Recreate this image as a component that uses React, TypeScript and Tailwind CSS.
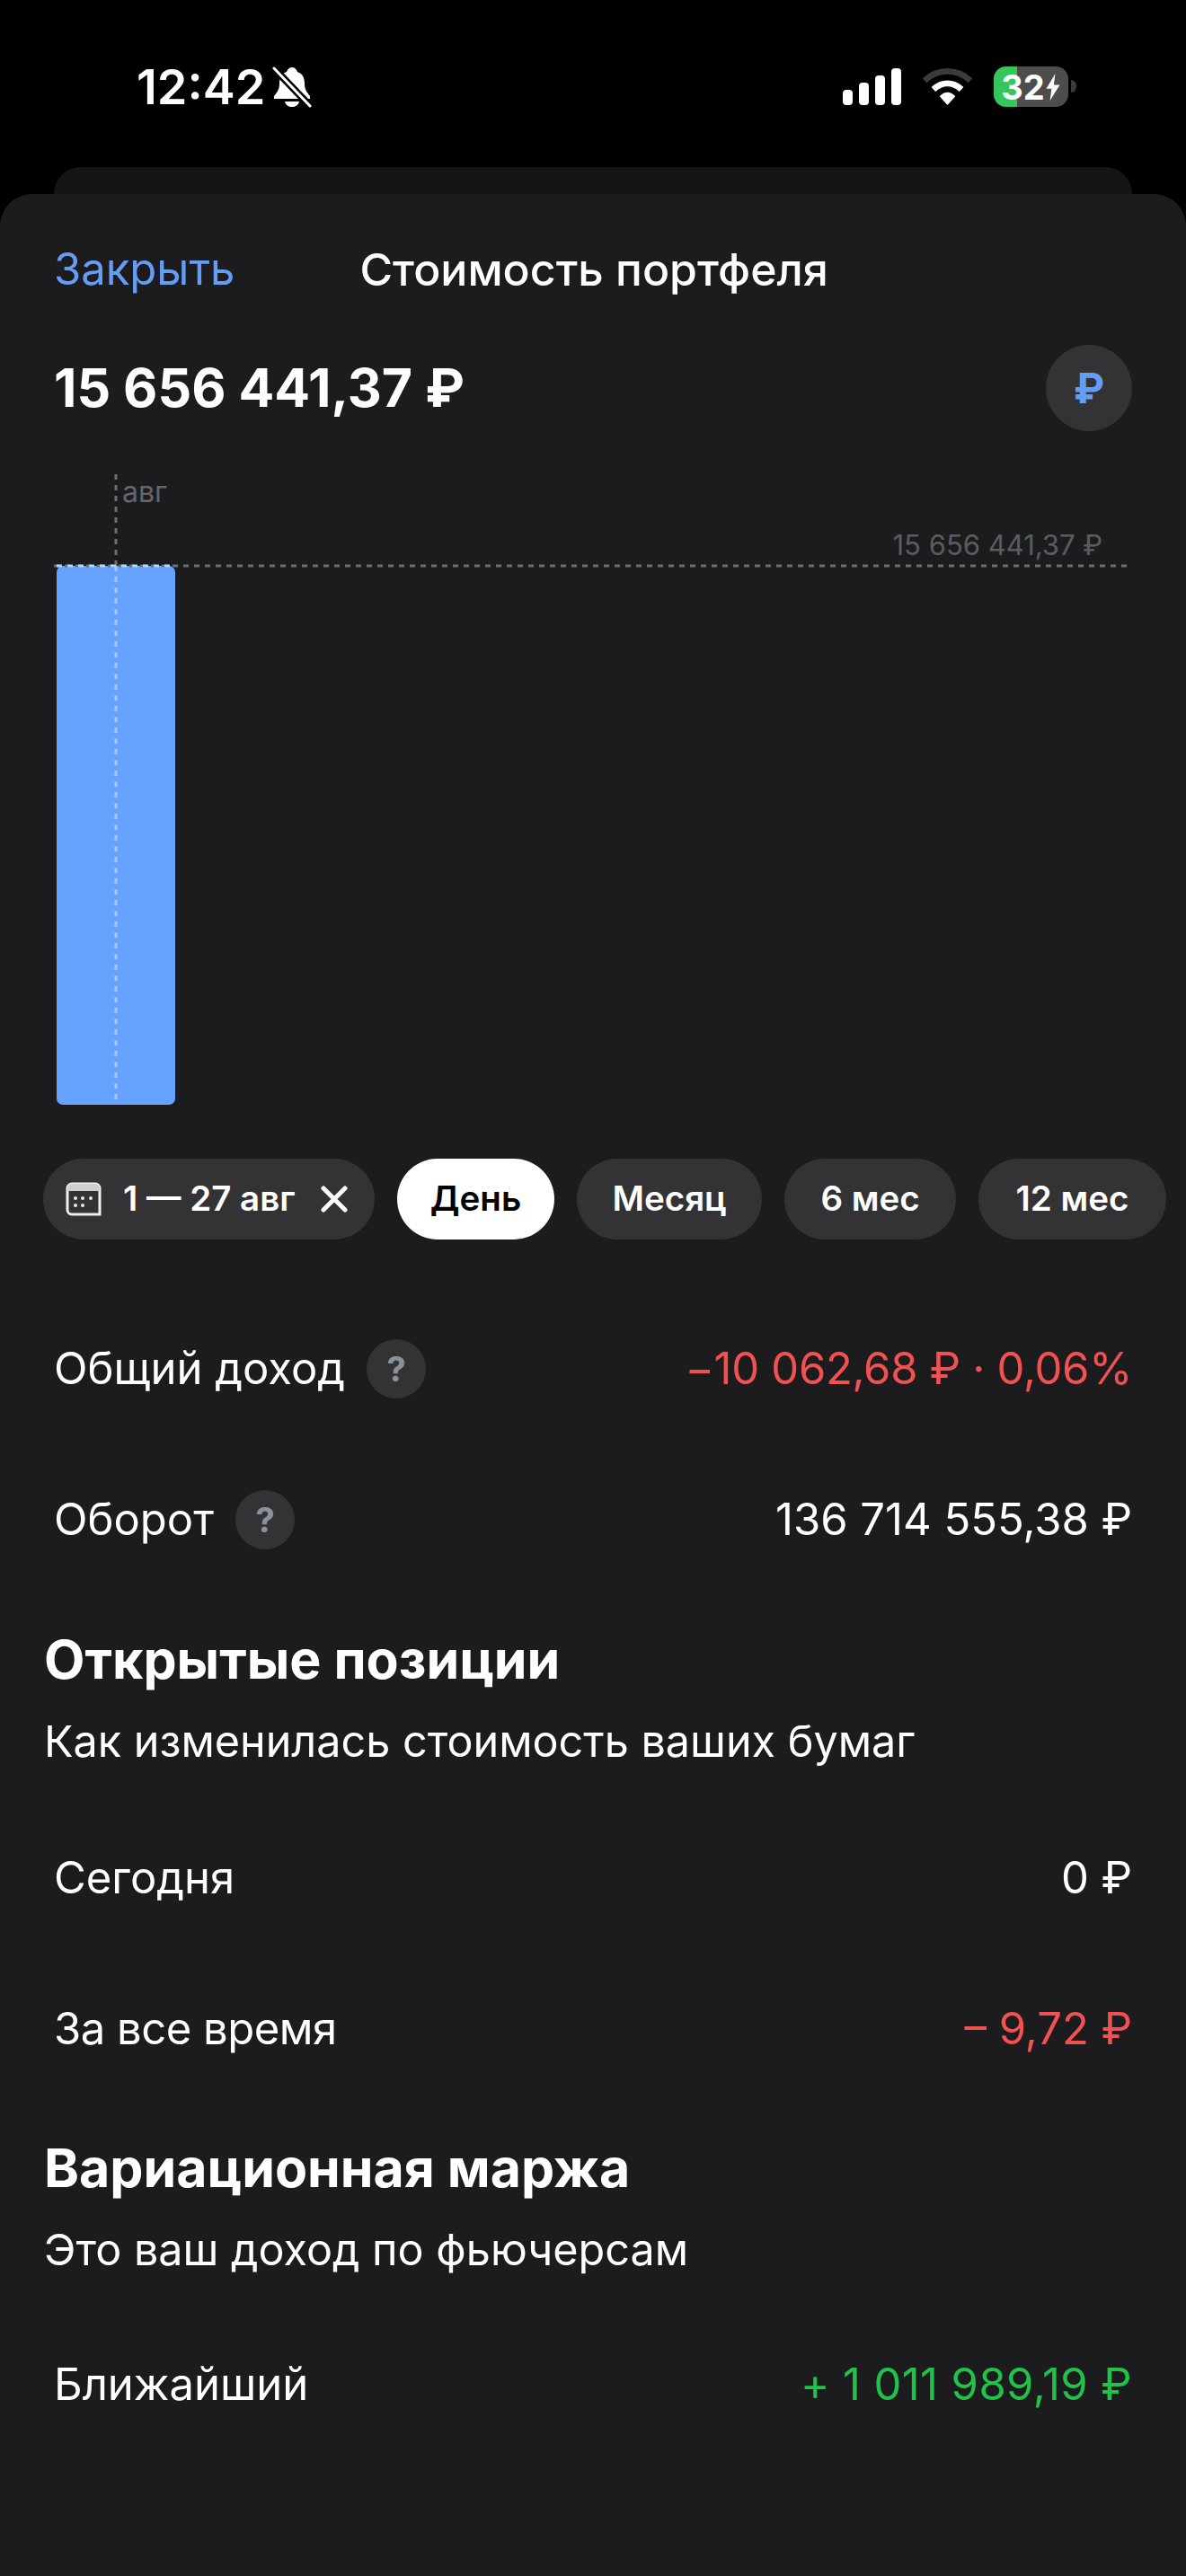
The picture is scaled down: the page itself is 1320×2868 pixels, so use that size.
const font = "font-['Inter','Liberation_Sans',sans-serif]";

function HelpBadge() {
  return (
    <span className="flex h-[66px] w-[66px] items-center justify-center rounded-full bg-[#333336] text-[38px] font-bold text-[#8e9199]">
      ?
    </span>
  );
}

function Row({
  label,
  value,
  labelClass = "",
  valueClass = "text-white",
  help = false,
}: {
  label: string;
  value: string;
  labelClass?: string;
  valueClass?: string;
  help?: boolean;
}) {
  return (
    <div className="flex h-[168px] items-center justify-between px-[60px]">
      <div className="flex items-center gap-6">
        <span className={`text-[49px] text-white ${labelClass}`}>{label}</span>
        {help ? <HelpBadge /> : null}
      </div>
      <span className={`text-[49px] ${valueClass}`}>{value}</span>
    </div>
  );
}

function Chip({
  label,
  widthClass,
  active = false,
}: {
  label: string;
  widthClass: string;
  active?: boolean;
}) {
  return (
    <div
      className={`flex h-[90px] shrink-0 items-center justify-center rounded-full text-[38.5px] font-semibold ${widthClass} ${
        active ? "bg-white text-black" : "bg-[#333336] text-white"
      }`}
    >
      {label}
    </div>
  );
}

function StatusBar() {
  return (
    <div className="flex h-[186px] items-start justify-between pl-[152px] pr-[131px] pt-[68px]">
      <div className="flex items-center gap-2">
        <span className="text-[54px] font-semibold leading-[58px] text-white">12:42</span>
        <svg width="44" height="46" viewBox="0 0 44 46" fill="none">
          <path d="M22 1c3 0 5 2 6 5 6 2 8 7 8 13 0 6 2 9 6 14v3H2v-3c4-5 6-8 6-14 0-6 2-11 8-13 1-3 3-5 6-5Z" fill="white" />
          <path d="M14 39h16c-1 4-4 6-8 6s-7-2-8-6Z" fill="white" />
          <path d="M2 2 42 44" stroke="black" strokeWidth="8" />
          <path d="M2 2 42 44" stroke="white" strokeWidth="3" strokeLinecap="round" />
        </svg>
      </div>
      <div className="flex items-center gap-[23px] pt-[6px]">
        <svg width="65" height="41" viewBox="0 0 65 41" fill="white">
          <rect x="0" y="24" width="11" height="17" rx="4" />
          <rect x="18" y="16" width="11" height="25" rx="4" />
          <rect x="36" y="8" width="11" height="33" rx="4" />
          <rect x="54" y="0" width="11" height="41" rx="4" />
        </svg>
        <svg width="57" height="41" viewBox="0 0 58 42">
          <path d="M3 14C18 0 40 0 55 14" fill="none" stroke="#3b3b3b" strokeWidth="7" />
          <path d="M13 24c10-9 22-9 32 0" fill="none" stroke="white" strokeWidth="7" />
          <path d="M20 32c6-6 12-6 18 0L29 42Z" fill="white" />
        </svg>
        <div className="relative flex">
          <div className="relative flex h-[45px] w-[83px] items-center justify-center overflow-hidden rounded-[14px] bg-[#4d4d4d]">
            <div className="absolute inset-y-0 left-0 w-[26px] bg-[#34c759]" />
            <span className="relative text-[38px] font-bold leading-none text-white">32</span>
            <svg className="relative" width="18" height="30" viewBox="0 0 18 36" fill="white">
              <path d="M12 0 0 20h7L5 36l13-21h-8Z" />
            </svg>
          </div>
          <div className="absolute -right-[9px] top-[15px] h-[14px] w-[6px] rounded-r-full bg-[#3b3b3b]" />
        </div>
      </div>
    </div>
  );
}

function Chart() {
  return (
    <div className="relative ml-[60px] mt-[48px] h-[702px] w-[1194px]">
      <span className="absolute left-[76px] top-[3px] text-[32px] leading-[34px] text-[#66666a]">авг</span>
      <span className="absolute right-[27px] top-[62px] text-[31px] leading-[34px] text-[#5c5c60]">15 656 441,37 ₽</span>
      <div className="absolute bottom-0 left-[3px] h-[600px] w-[132px] rounded-[7px] bg-[#66a3ff]" />
      <svg className="absolute inset-0" width="1194" height="702" viewBox="0 0 1194 702" fill="none">
        <line x1="0" y1="102" x2="1194" y2="102" stroke="#6e6e72" strokeWidth="3" strokeDasharray="6 6" />
        <line x1="69" y1="0" x2="69" y2="102" stroke="#6e6e72" strokeWidth="3" strokeDasharray="6 6" />
        <line x1="3" y1="102" x2="135" y2="102" stroke="#b5d2ff" strokeWidth="3" strokeDasharray="6 6" />
        <line x1="69" y1="102" x2="69" y2="702" stroke="#a3c8ff" strokeWidth="3" strokeDasharray="6 6" />
      </svg>
    </div>
  );
}

export default function App() {
  return (
    <div className={`h-[2868px] w-[1320px] overflow-hidden bg-black ${font}`}>
      <StatusBar />
      <div className="mx-[60px] h-[30px] rounded-t-[30px] bg-[#151517]" />
      <div className="h-[2652px] rounded-t-[36px] bg-[#1c1c1e]">
        <div className="flex h-[168px] items-center gap-[139px] px-[60px]">
          <span className="text-[49px] text-[#659df5]">Закрыть</span>
          <span className="text-[50px] font-medium text-white">Стоимость портфеля</span>
        </div>
        <div className="flex items-center justify-between px-[60px]">
          <span className="text-[59px] font-bold text-white">15 656 441,37 ₽</span>
          <span className="flex h-[96px] w-[96px] items-center justify-center rounded-full bg-[#333336] text-[46px] font-bold text-[#659df5]">
            ₽
          </span>
        </div>
        <Chart />
        <div className="mt-[60px] flex gap-[25px] overflow-hidden pl-[48px]">
          <div className="flex h-[90px] shrink-0 items-center rounded-full bg-[#333336] pl-[25px] pr-[30px] text-[38.5px] font-semibold text-white">
            <svg width="40" height="38" viewBox="0 0 40 38" fill="none">
              <path d="M2 7a5 5 0 0 1 5-5h26a5 5 0 0 1 5 5v29H7a5 5 0 0 1-5-5V7Z" stroke="#f0f0f0" strokeWidth="3" />
              <path d="M2 7a5 5 0 0 1 5-5h26a5 5 0 0 1 5 5v3H2V7Z" fill="#cfcfcf" />
              <g fill="#e8e8e8">
                <circle cx="11" cy="18" r="2" />
                <circle cx="19" cy="18" r="2" />
                <circle cx="28" cy="18" r="2" />
                <circle cx="11" cy="26" r="2" />
                <circle cx="19" cy="26" r="2" />
              </g>
            </svg>
            <span className="ml-[24px] w-[191px] whitespace-nowrap">1 — 27 авг</span>
            <svg className="ml-[29px]" width="30" height="30" viewBox="0 0 30 30" fill="none">
              <path d="M3 3 27 27M27 3 3 27" stroke="white" strokeWidth="5" strokeLinecap="round" />
            </svg>
          </div>
          <Chip label="День" widthClass="w-[175px]" active />
          <Chip label="Месяц" widthClass="w-[206px]" />
          <Chip label="6 мес" widthClass="w-[191px]" />
          <Chip label="12 мес" widthClass="w-[209px]" />
        </div>
        <div className="mt-[60px]">
          <Row label="Общий доход" value="−10 062,68 ₽ · 0,06%" valueClass="text-[#f25151] tracking-[-0.3px]" help />
          <Row label="Оборот" value="136 714 555,38 ₽" help />
        </div>
        <div className="px-[49px] pt-[37px]">
          <h2 className="text-[59px] font-bold leading-[70px] text-white">Открытые позиции</h2>
          <p className="mt-[23px] text-[48.5px] leading-[66px] text-white">Как изменилась стоимость ваших бумаг</p>
        </div>
        <div className="mt-[35px]">
          <Row label="Сегодня" value="0 ₽" />
          <Row label="За все время" labelClass="tracking-[-0.5px]" value="– 9,72 ₽" valueClass="text-[#f25151]" />
        </div>
        <div className="px-[49px] pt-[36px]">
          <h2 className="text-[59px] font-bold leading-[70px] text-white">Вариационная маржа</h2>
          <p className="mt-[23px] text-[48.5px] leading-[66px] text-white">Это ваш доход по фьючерсам</p>
        </div>
        <div className="mt-[33px]">
          <Row label="Ближайший" value="+ 1 011 989,19 ₽" valueClass="text-[#21c14a] tracking-[0.4px]" />
        </div>
      </div>
    </div>
  );
}
